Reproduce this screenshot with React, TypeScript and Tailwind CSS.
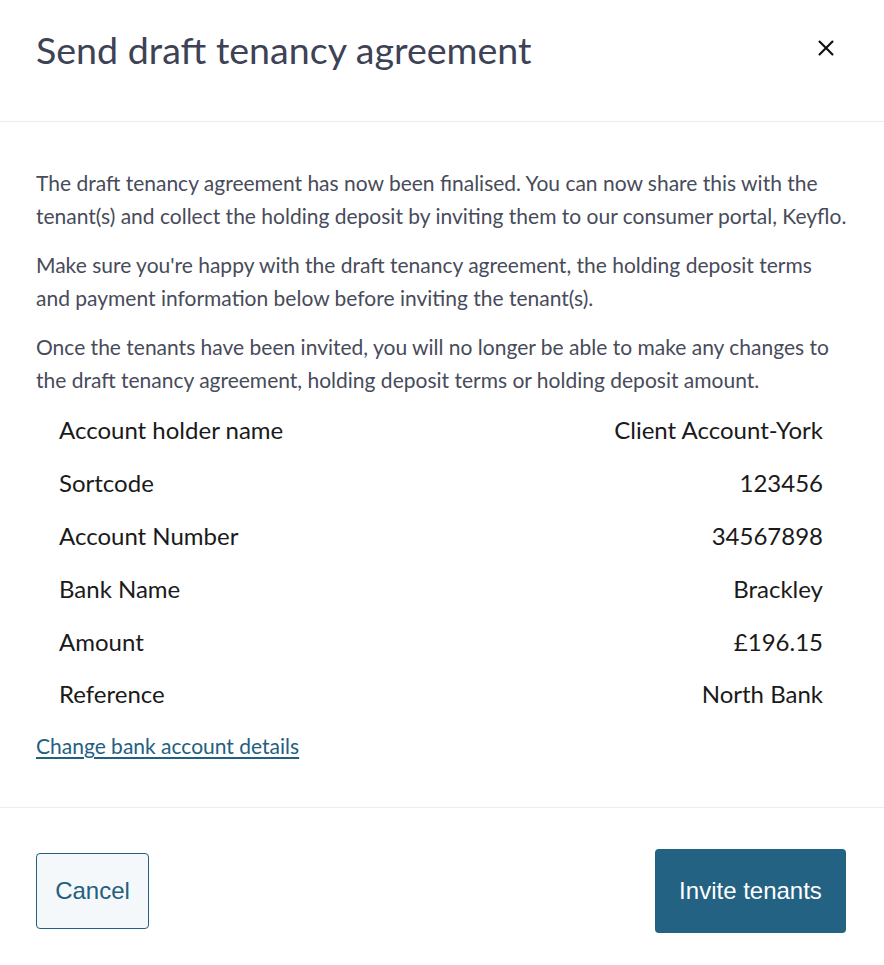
import React from 'react';
import { X } from 'lucide-react';

const rows: [string, string][] = [
  ['Account holder name', 'Client Account-York'],
  ['Sortcode', '123456'],
  ['Account Number', '34567898'],
  ['Bank Name', 'Brackley'],
  ['Amount', '£196.15'],
  ['Reference', 'North Bank'],
];

export default function App() {
  return (
    <div className="min-h-[965px] w-[884px] bg-white font-['Lato','Noto_Sans',sans-serif]">
      <header className="flex h-[122px] items-start justify-between border-b border-[#ececec] pl-[36px] pr-[45px] pt-[26px]">
        <h1 className="text-[37.6px] leading-[48px] text-[#3d4255]">Send draft tenancy agreement</h1>
        <button type="button" aria-label="Close" className="mt-[9px] text-[#111]">
          <X size={26} strokeWidth={1.9} />
        </button>
      </header>

      <div className="border-b border-[#ececec] px-[36px] pb-[46px] pt-[44px]">
        <div className="space-y-[16px] text-[21px] leading-[33px] text-[#474b5a]">
          <p>
            The draft tenancy agreement has now been finalised. You can now share this with the tenant(s) and collect the
            holding deposit by inviting them to our consumer portal, Keyflo.
          </p>
          <p>
            Make sure you're happy with the draft tenancy agreement, the holding deposit terms and payment information
            below before inviting the tenant(s).
          </p>
          <p>
            Once the tenants have been invited, you will no longer be able to make any changes to the draft tenancy
            agreement, holding deposit terms or holding deposit amount.
          </p>
        </div>

        <dl className="mt-[8px] pl-[23px] pr-[25px] text-[24px] text-[#1a1a1a]">
          {rows.map(([label, value]) => (
            <div key={label} className="flex h-[52.8px] items-center justify-between">
              <dt>{label}</dt>
              <dd>{value}</dd>
            </div>
          ))}
        </dl>

        <a href="#" className="mt-[10px] inline-block text-[21px] leading-[30px] text-[#23607f] underline underline-offset-[3px]">
          Change bank account details
        </a>
      </div>

      <footer className="flex items-center justify-between px-[36px] pt-[41px] font-['Liberation_Sans',Arial,sans-serif] text-[24px]">
        <button
          type="button"
          className="h-[76px] w-[113px] rounded-[4px] border border-[#23607f] bg-[#f4f8fa] text-[#23607f]"
        >
          Cancel
        </button>
        <button type="button" className="mr-[2px] h-[84px] w-[191px] rounded-[4px] bg-[#236282] text-white">
          Invite tenants
        </button>
      </footer>
    </div>
  );
}
